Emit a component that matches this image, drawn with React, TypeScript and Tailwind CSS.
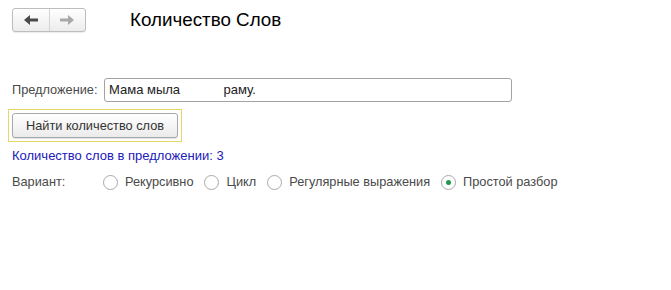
import React, { useState } from 'react';

const options = ['Рекурсивно', 'Цикл', 'Регулярные выражения', 'Простой разбор'];

const ArrowLeft = ({ color }: { color: string }) => (
  <svg width="14" height="10" viewBox="0 0 14 10">
    <path d="M0 5 L6 0 L6 3.5 L14 3.5 L14 6.5 L6 6.5 L6 10 Z" fill={color} />
  </svg>
);

const ArrowRight = ({ color }: { color: string }) => (
  <svg width="14" height="10" viewBox="0 0 14 10">
    <path d="M14 5 L8 0 L8 3.5 L0 3.5 L0 6.5 L8 6.5 L8 10 Z" fill={color} />
  </svg>
);

const Radio = ({ checked }: { checked: boolean }) => (
  <span className="w-[15px] h-[15px] rounded-full border border-[#a9a9a9] bg-white flex items-center justify-center shrink-0">
    {checked && <span className="w-[5px] h-[5px] rounded-full bg-[#1f9a4a]" />}
  </span>
);

const App: React.FC = () => {
  const [variant, setVariant] = useState(3);

  return (
    <div
      className="w-[671px] h-[290px] bg-white text-[12.75px] text-[#4a4a4a]"
      style={{ fontFamily: '"Liberation Sans", Arial, sans-serif' }}
    >
      {/* Header */}
      <div className="flex items-center pt-[8px] pl-[12px]">
        <div className="flex h-[24px] w-[74px] rounded-[3px] border border-[#bdbdbd] bg-gradient-to-b from-white to-[#ececec] shadow-[0_1px_1px_rgba(0,0,0,0.08)]">
          <div className="flex-1 flex items-center justify-center border-r border-[#d4d4d4]">
            <ArrowLeft color="#4a4a4a" />
          </div>
          <div className="flex-1 flex items-center justify-center">
            <ArrowRight color="#a8a8a8" />
          </div>
        </div>
        <h1 className="ml-[44px] text-[18.8px] leading-[24px] text-black">Количество Слов</h1>
      </div>

      {/* Form */}
      <div className="mt-[46px] pl-[12px]">
        <div className="flex items-center h-[24px]">
          <span className="w-[92px] shrink-0">Предложение:</span>
          <div className="w-[408px] h-[24px] rounded-[3px] border border-[#a3a3a3] flex items-center px-[4px] text-[13px] text-[#222]">
            Мама мыла&nbsp;&nbsp;&nbsp;&nbsp;&nbsp;&nbsp;&nbsp;&nbsp;&nbsp;&nbsp;&nbsp;&nbsp;раму.
          </div>
        </div>

        <div className="mt-[7px] -ml-[4px] w-[174px] h-[33px] border border-[#e6d56a] p-[3px]">
          <button className="w-full h-full rounded-[3px] border border-[#a8a8a8] bg-gradient-to-b from-white to-[#ebebeb] text-[12.75px] text-[#333] shadow-[0_1px_1px_rgba(0,0,0,0.12)]">
            Найти количество слов
          </button>
        </div>

        <div className="mt-[6px] h-[16px] leading-[16px] text-[13px] text-[#2020b8]">
          Количество слов в предложении: 3
        </div>

        <div className="mt-[10px] flex items-center h-[16px]">
          <span className="w-[91px] shrink-0">Вариант:</span>
          {options.map((o, i) => (
            <label
              key={o}
              className="flex items-center gap-[7px] mr-[11px] cursor-pointer"
              onClick={() => setVariant(i)}
            >
              <Radio checked={variant === i} />
              <span>{o}</span>
            </label>
          ))}
        </div>
      </div>
    </div>
  );
};

export default App;
